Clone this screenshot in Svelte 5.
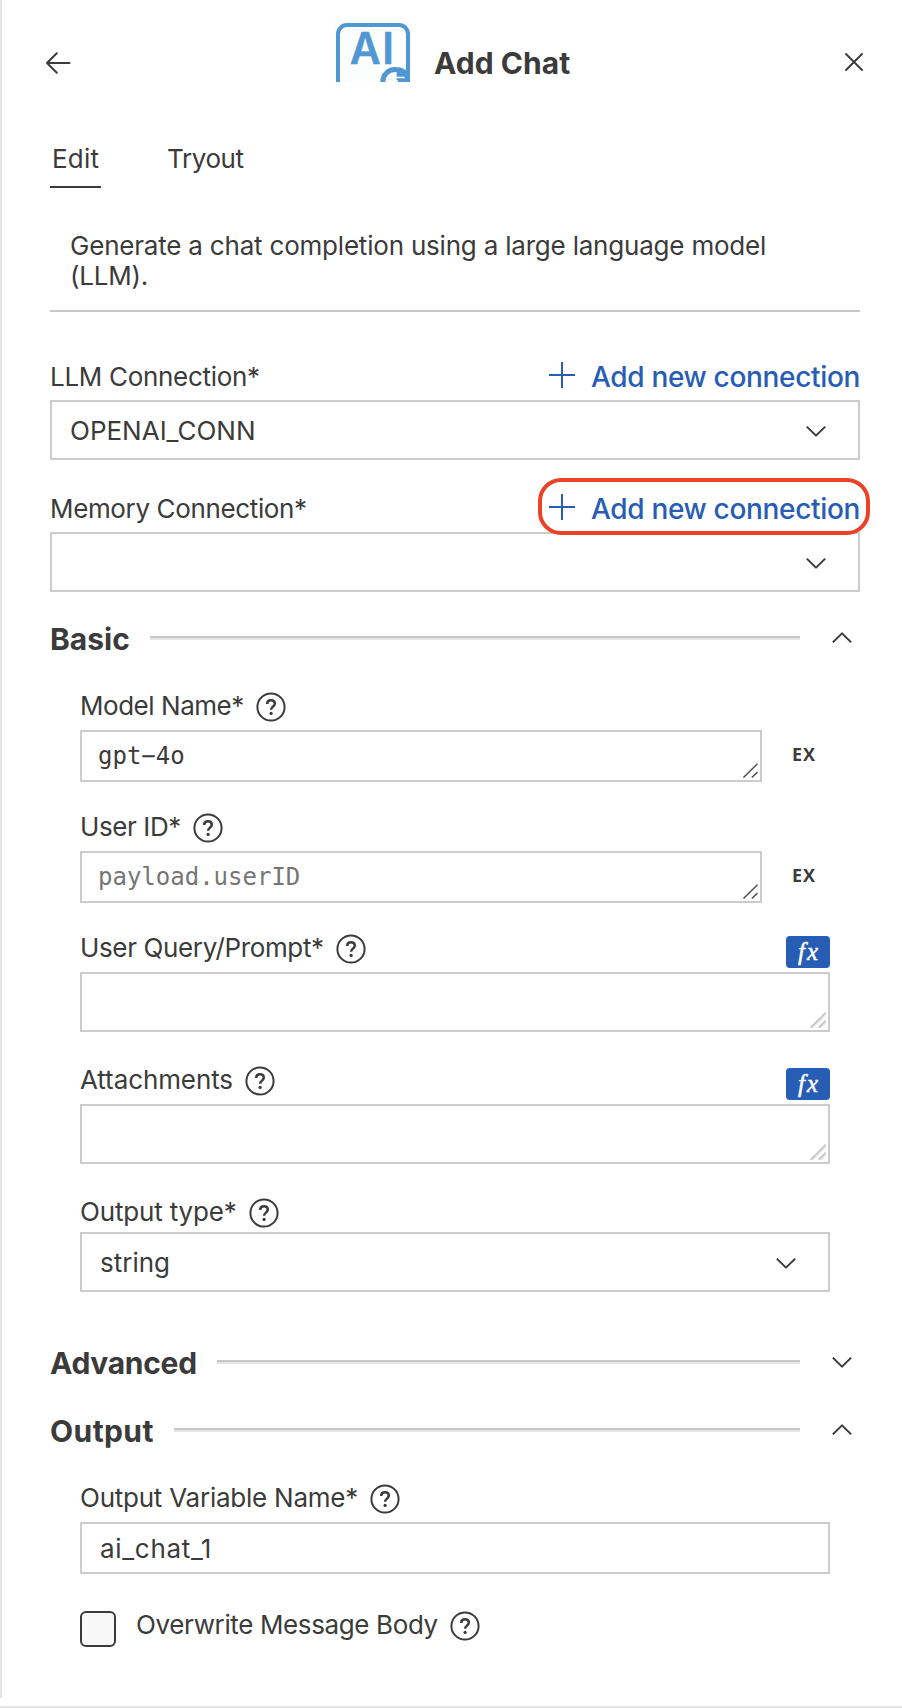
<script>
  const tracking = {
    'Edit': 0.2, 'Tryout': -0.4, 'LLM Connection*': -0.3, 'OPENAI_CONN': 0,
    'Memory Connection*': -0.36, 'Model Name*': -0.46, 'User ID*': -0.4,
    'User Query/Prompt*': -0.36, 'Attachments': -0.1, 'Output type*': -0.17,
    'Output Variable Name*': -0.24, 'ai_chat_1': 0.7, 'Overwrite Message Body': -0.37,
    'Add new connection': -0.33, 'Add Chat': 0.03, 'Basic': 0, 'Advanced': -0.3, 'Output': 0.42
  };
  const ls = (t) => `letter-spacing:${tracking[t] ?? 0}px`;
</script>

{#snippet txt(t)}<span style={ls(t)}>{t}</span>{/snippet}

{#snippet help()}
  <svg class="help" width="30" height="30" viewBox="0 0 30 30">
    <circle cx="15" cy="15" r="13.6" />
    <path d="M11.2 11.9c0-2.3 1.6-3.6 3.8-3.6s3.8 1.3 3.8 3.3c0 3-3.7 3-3.7 6.1" stroke-width="2.5" />
    <circle class="dot" cx="15.1" cy="21.4" r="1.6" />
  </svg>
{/snippet}

{#snippet chevron(up)}
  <svg class="chevron" width="20" height="12" viewBox="0 0 20 12">
    <path d={up ? 'M.8 10.4 10 1.4l9.2 9' : 'M.8 1.6 10 10.6l9.2-9'} />
  </svg>
{/snippet}

{#snippet addLink()}
  <button class="add">
    <svg width="26" height="26" viewBox="0 0 26 26"><path d="M13 0v26M0 13h26" /></svg>
    {@render txt('Add new connection')}
  </button>
{/snippet}

{#snippet grip(dark)}
  <svg class="grip" class:dark width="16" height="16" viewBox="0 0 16 16">
    {#if dark}
      <path d="M1.5 15.5 15.5 1.800M9.800 15.500l5.700-5.400" />
    {:else}
      <path class="shade" d="M2 16 16 2M10 16l6-6" />
      <path d="M.5 15.7 15.7.5M8.5 15.7l7.2-7.2" />
    {/if}
  </svg>
{/snippet}

{#snippet section(title, up)}
  <div class="section-head" class:up>
    <h2 style={ls(title)}>{title}</h2>
    <i class="rule"></i>
    {@render chevron(up)}
  </div>
{/snippet}

{#snippet label(t)}
  <div class="label">{@render txt(t)}{@render help()}</div>
{/snippet}

<div class="page">
  <main class="panel">
    <header>
      <svg class="arrow" width="26" height="22" viewBox="0 0 26 22">
        <path d="M10.8 1.2 1 11l9.8 9.8M1 11h22.500" />
      </svg>
      <svg class="logo" width="78" height="62" viewBox="334 20 78 62">
        <rect x="334" y="20" width="78" height="62" fill="#fcfdfd" />
        <path d="M338 82V34a9 9 0 0 1 9-9h52a9 9 0 0 1 9 9v48" fill="none" stroke="#5097d3" stroke-width="4" />
        <text x="349.800" y="64" textLength="31" lengthAdjust="spacingAndGlyphs">A</text>
        <text x="381.9" y="64">I</text>
        <path d="M382.8 82a12.2 12.2 0 0 1 12.7-12.4c5 0 9 2 11.5 5" fill="none" stroke="#5097d3" stroke-width="5" />
        <path d="M396.6 70H404l6 4v8h-13.4z" fill="#5097d3" />
        <path d="M396 77.5h8.5M396 81h2" stroke="#fff" stroke-width="1.6" fill="none" />
      </svg>
      <h1 style={ls('Add Chat')}>Add Chat</h1>
      <svg class="close" width="18" height="18" viewBox="0 0 18 18"><path d="M1 1l16 16M17 1 1 17" /></svg>
    </header>

    <div class="content">
      <nav>
        <div class="tab active">{@render txt('Edit')}</div>
        <div class="tab">{@render txt('Tryout')}</div>
      </nav>

      <p class="desc">Generate a chat completion using a large language model<br />(LLM).</p>

      <div class="row llm">{@render txt('LLM Connection*')}{@render addLink()}</div>
      <div class="select">{@render txt('OPENAI_CONN')}{@render chevron(false)}</div>

      <div class="row memory">
        {@render txt('Memory Connection*')}
        <div class="marked">{@render addLink()}<i class="ring"></i></div>
      </div>
      <div class="select"><span></span>{@render chevron(false)}</div>

      <section class="basic">
        {@render section('Basic', true)}
        <div class="fields">
          {@render label('Model Name*')}
          <div class="expr">
            <div class="box mono"><span>gpt−4o</span>{@render grip(true)}</div>
            <strong>EX</strong>
          </div>
          <div class="gap20"></div>
          {@render label('User ID*')}
          <div class="expr">
            <div class="box mono muted"><span>payload.userID</span>{@render grip(true)}</div>
            <strong>EX</strong>
          </div>
          <div class="gap20"></div>
          <div class="with-fx">{@render label('User Query/Prompt*')}<em>fx</em></div>
          <div class="box tall">{@render grip(false)}</div>
          <div class="gap23"></div>
          <div class="with-fx">{@render label('Attachments')}<em>fx</em></div>
          <div class="box tall">{@render grip(false)}</div>
          <div class="type">{@render label('Output type*')}</div>
          <div class="select"><span>string</span>{@render chevron(false)}</div>
        </div>
      </section>

      <section class="advanced">{@render section('Advanced', false)}</section>

      <section class="output">
        {@render section('Output', true)}
        <div class="fields">
          {@render label('Output Variable Name*')}
          <div class="box plain">{@render txt('ai_chat_1')}</div>
          <div class="check">
            <i></i>
            {@render label('Overwrite Message Body')}
          </div>
        </div>
      </section>
    </div>
  </main>
</div>

<style>
  :global(body) { margin: 0; background: #fff; }
  .page {
    box-sizing: border-box;
    height: 1708px;
    border-bottom: 2px solid #e5e5e5;
    overflow: hidden;
    color: #3b3b3b;
    font: 26px/30px Inter, "Liberation Sans", sans-serif;
  }
  .page :global(*) { box-sizing: border-box; }
  span, h1, h2 { white-space: nowrap; }
  svg { display: block; flex: none; }
  .panel { height: 1698px; border-left: 2px solid #e5e5e5; }

  header { display: flex; align-items: center; height: 126px; padding: 0 39px 0 44px; }
  .arrow, .close { fill: none; stroke: #3b3b3b; stroke-width: 2; stroke-linecap: round; stroke-linejoin: round; }
  .close { margin: 0 0 2px auto; stroke-width: 1.9; }
  .logo { align-self: flex-start; margin: 20px 0 0 262px; }
  .logo text { font: 600 44px Inter, sans-serif; fill: #5097d3; stroke: #5097d3; stroke-width: 0.4; }
  h1 { margin: 0 0 0 22px; font-size: 30px; font-weight: 700; }

  .content { width: 810px; margin-left: 48px; }
  nav { display: flex; gap: 66px; padding-top: 5px; }
  .tab { height: 57px; line-height: 55px; }
  .active { width: 51px; padding-left: 2px; border-bottom: 2px solid #3b3b3b; }

  .desc { margin: 43px 0 0; padding: 0 20px 19px; border-bottom: 2px solid #c8c8c8; letter-spacing: -0.204px; white-space: nowrap; }

  .row { display: flex; align-items: center; justify-content: space-between; height: 47px; }
  .llm { margin-top: 41px; }
  .memory { margin-top: 25px; }
  .add {
    display: flex; align-items: center; gap: 16px; padding: 0; border: 0; background: none;
    color: #275db5; font: 500 28px/34px Inter, sans-serif;
  }
  .add svg { margin-bottom: 3px; fill: none; stroke: #275db5; stroke-width: 2; }
  .marked { position: relative; }
  .ring {
    position: absolute; left: -11px; top: -14px; width: 332px; height: 57px; z-index: 1;
    border: 4px solid #eb4127; border-radius: 23px;
  }

  .select { display: flex; align-items: center; justify-content: space-between; height: 60px; padding: 0 32px 0 18px; border: 2px solid #ccc; }
  .select span, .plain span { padding-top: 2px; }
  .chevron { margin-top: 2px; fill: none; stroke: #3b3b3b; stroke-width: 2; stroke-linejoin: round; }

  .basic { margin-top: 27px; }
  .advanced { margin-top: 51px; }
  .output { margin-top: 28px; }
  .section-head { display: flex; align-items: center; height: 40px; padding-right: 8px; }
  .section-head .chevron { margin: 0 0 2px 32px; }
  .section-head.up .chevron { margin-bottom: 3px; }
  h2 { margin: 0; font-size: 30px; line-height: 40px; font-weight: 700; }
  .rule { flex: 1; height: 4px; margin: 0 0 2px 20px; border-top: 2px solid #c8c8c8; background: #e5e5e5; }

  .fields { padding: 22px 30px 0; }
  .label { display: flex; align-items: center; gap: 12.5px; height: 49px; }
  .help { margin-top: 3px; fill: none; stroke: #3b3b3b; stroke-width: 2; }
  .help .dot { fill: #3b3b3b; stroke: none; }

  .expr { display: flex; align-items: center; }
  .box { display: flex; align-items: center; border: 2px solid #ccc; }
  .expr .box { width: 682px; height: 52px; padding-left: 16px; }
  .expr strong { margin: 0 0 4px 30px; font: 700 18px/22px "Open Sans", sans-serif; letter-spacing: 1px; }
  .mono { font-family: "DejaVu Sans Mono", monospace; font-size: 24px; }
  .muted span { color: #757575; }
  .tall { height: 60px; }
  .plain { height: 52px; padding-left: 18px; }
  .grip { align-self: flex-end; margin: 0 2px 2px auto; fill: none; stroke: #bdbdbd; stroke-width: 1.3; }
  .grip .shade { stroke: #e3e3e3; stroke-width: 2; }
  .grip.dark { stroke: #505050; stroke-width: 1.5; }

  .gap20 { height: 20px; }
  .gap23 { height: 23px; }
  .with-fx { display: flex; justify-content: space-between; align-items: flex-end; }
  em {
    width: 44px; height: 32px; margin-bottom: 4px; padding-left: 12px; border-radius: 4px; background: #275db5; color: #fff;
    font: italic 25px/32px "Liberation Serif", serif; letter-spacing: 2px; -webkit-text-stroke: 0.5px #fff;
  }
  .type { margin-top: 27px; }
  .type .label { height: 41px; }

  .check { display: flex; align-items: flex-start; gap: 20px; margin-top: 32px; }
  .check i { width: 36px; height: 36px; margin-top: 5px; border: 2px solid #3b3b3b; border-radius: 6px; background: #f8f8f8; }
  .check .label { height: 37px; }
</style>
